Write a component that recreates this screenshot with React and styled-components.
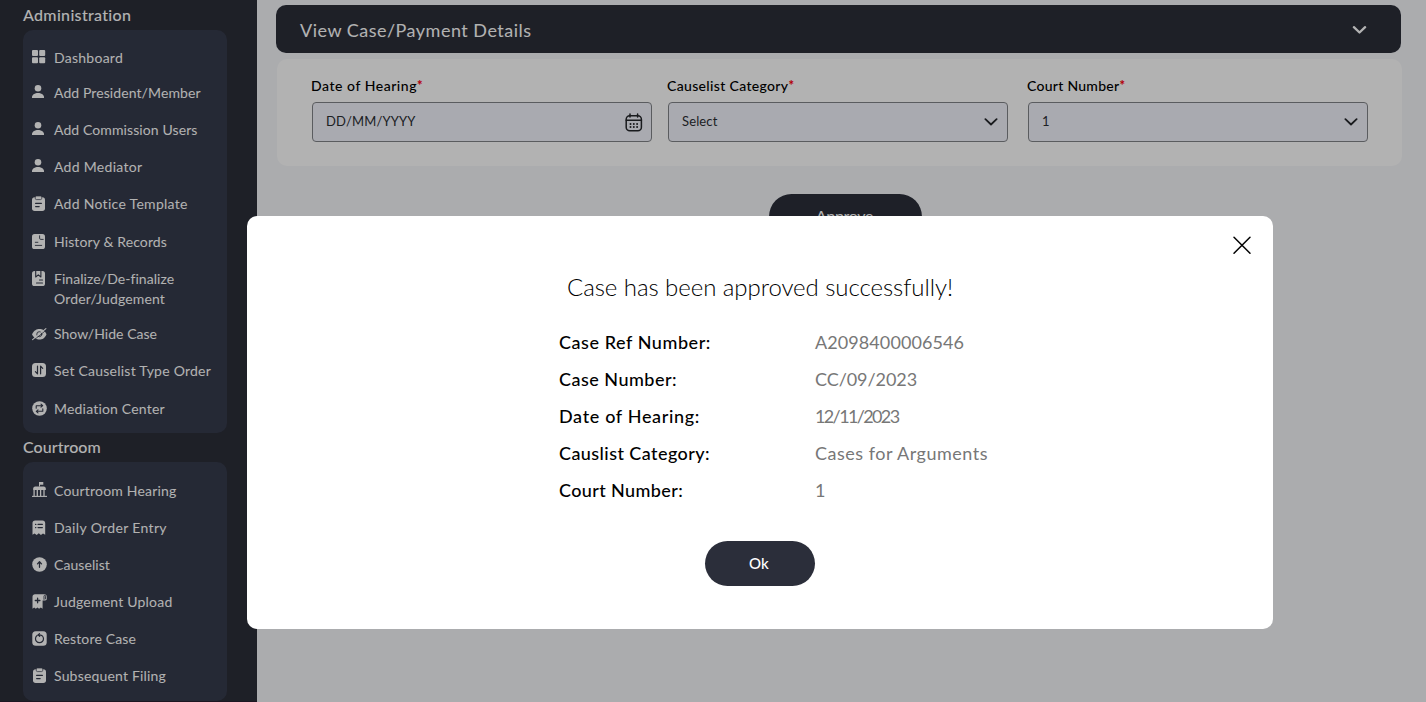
import React from "react";
import styled, { createGlobalStyle } from "styled-components";

const GlobalStyle = createGlobalStyle`
  *, *::before, *::after { box-sizing: border-box; }
  body {
    margin: 0;
    overflow: hidden;
    background: #f5f7fa;
    font-family: Lato, "Open Sans", sans-serif;
    font-variant-ligatures: none;
  }
  button { font-family: inherit; border: 0; padding: 0; cursor: pointer; }
`;

const Text = styled.span`
  white-space: nowrap;
  letter-spacing: ${(p) => p.$track || 0}px;
`;

const Shell = styled.div`
  display: flex;
  height: 702px;
`;

/* Sidebar */
const Sidebar = styled.aside`
  display: flex;
  flex-direction: column;
  width: 257px;
  flex: none;
  padding: 5px 30px 0 23px;
  background: #2b2e39;
  border-bottom: 1px solid #2a2032;
`;

const SectionTitle = styled.h2`
  margin: 0;
  height: ${(p) => p.$height}px;
  padding-top: ${(p) => p.$top || 0}px;
  font-size: 16px;
  font-weight: 500;
  line-height: 20px;
  color: #fff;
`;

const Menu = styled.nav`
  display: flex;
  flex-direction: column;
  flex: none;
  height: ${(p) => p.$height}px;
  padding: ${(p) => p.$top}px 0 0 9px;
  border-radius: 10px;
  background: #363b4c;
`;

const MenuItem = styled.a`
  display: flex;
  flex: none;
  align-items: flex-start;
  gap: 6px;
  height: ${(p) => p.$height}px;
  color: #fff;
  font-size: 14px;
  line-height: 20px;
`;

const MenuIcon = styled.svg`
  flex: none;
  width: 16px;
  height: 16px;
  margin-top: ${(p) => p.$top}px;
  fill: #fff;
`;

const MenuLabel = styled.span`
  display: flex;
  flex-direction: column;
`;

/* Main area */
const Main = styled.main`
  display: flex;
  flex-direction: column;
  flex: 1;
  padding: 5px 24px 0 19px;
`;

const Header = styled.header`
  display: flex;
  align-items: center;
  justify-content: space-between;
  width: 1125px;
  height: 48px;
  padding: 1px 34px 0 24px;
  border-radius: 10px;
  background: #2b2e39;
  color: #fff;
  font-size: 18px;
  line-height: 24px;
`;

const HeaderTitle = styled.h1`
  margin: 1px 0 0;
  font: inherit;
`;

const Card = styled.section`
  display: flex;
  width: 1125px;
  height: 107px;
  margin: 6px 0 0 1px;
  padding: 17px 34px 0 35px;
  border-radius: 10px;
  background: #fff;
`;

const Field = styled.div`
  width: 340px;
  margin-right: ${(p) => p.$gap || 0}px;
`;

const Label = styled.label`
  display: flex;
  height: 26px;
  margin-left: -1px;
  color: #000;
  font-size: 14px;
  font-weight: 500;
  line-height: 19px;
`;

const Required = styled.span`
  color: #ff0010;
  font-size: 13px;
  line-height: 19px;
  font-weight: 900;
`;

const Control = styled.div`
  display: flex;
  align-items: center;
  justify-content: space-between;
  height: 40px;
  padding: 0 ${(p) => p.$right}px 0 13px;
  border: 1px solid #828589;
  border-radius: 4px;
  background: #f3f4fd;
  color: #2b2e33;
  font-size: 13px;
  line-height: 18px;
`;

const ControlText = styled(Text)`
  margin-top: -2px;
`;

const Pill = styled.button`
  width: ${(p) => p.$width}px;
  height: 45px;
  padding: 0 2px 2px 0;
  border-radius: 23px;
  background: #2b2e3a;
  color: #fff;
  font-size: ${(p) => p.$size}px;
  font-weight: ${(p) => p.$weight || 400};
`;

const Actions = styled.div`
  display: flex;
  justify-content: center;
  width: 1139px;
  margin-top: 28px;
`;

/* Dialog */
const Overlay = styled.div`
  position: fixed;
  inset: 0;
  background: rgba(0, 0, 0, 0.3);
`;

const Dialog = styled.div`
  position: absolute;
  left: 247px;
  top: 216px;
  display: flex;
  flex-direction: column;
  align-items: center;
  width: 1026px;
  height: 413px;
  border-radius: 10px;
  background: #fff;
`;

const DialogBar = styled.div`
  display: flex;
  justify-content: flex-end;
  width: 100%;
  height: 56px;
  padding: 20px 21px 0 0;
`;

const Close = styled.button`
  width: 20px;
  height: 20px;
  background: none;
`;

const DialogTitle = styled.h2`
  margin: 0 0 22px;
  height: 30px;
  font-size: 24px;
  font-weight: 300;
  line-height: 30px;
  color: #000;
`;

const Details = styled.dl`
  display: grid;
  grid-template-columns: 256px 1fr;
  grid-auto-rows: 37px;
  margin: 0 0 32px;
  width: 402px;
  font-size: 18px;
  line-height: 37px;
`;

const Term = styled.dt`
  color: #000;
  font-weight: 500;
`;

const Value = styled.dd`
  margin: 0;
  min-width: 0;
  width: 180px;
  color: #777;
`;

const INK = "#363b4c";
const cut = { fill: "none", stroke: INK, strokeWidth: 1.1, strokeLinecap: "round", strokeLinejoin: "round" };

const icons = {
  grid: (
    <g>
      <rect x="0" y="0" width="6" height="6" rx="1" />
      <rect x="7.2" y="0" width="6" height="6" rx="1" />
      <rect x="0" y="7.2" width="6" height="6" rx="1" />
      <rect x="7.2" y="7.2" width="6" height="6" rx="1" />
    </g>
  ),
  person: (
    <g>
      <circle cx="6" cy="3.3" r="3.3" />
      <path d="M0 13v-.9C0 9.600 3 8 6 8s6 1.600 6 4.100v.9z" />
    </g>
  ),
  clipboard: (
    <g>
      <rect x="0" y="1.300" width="13" height="13.700" rx="2.700" />
      <rect x="3.300" y="0" width="6.400" height="3.600" rx="1.200" stroke={INK} strokeWidth=".7" />
      <path d="M3.600 7.400h5.800M3.600 10.600h3.600" {...cut} />
    </g>
  ),
  history: (
    <g>
      <rect x="0" y="0" width="13" height="15" rx="2.600" />
      <path d="M7.600 1.800v2.400c0 .8.4 1.200 1.200 1.200h2.400M3.300 8.300h2.600M3.300 11.400h6.400" {...cut} strokeWidth=".9" />
    </g>
  ),
  finalize: (
    <g>
      <rect x="0" y="0" width="13" height="15" rx="2.600" />
      <path d="M3.700 0v6l2.600-2.200L8.900 6V0M7.500 9h3M4.500 12h6" {...cut} />
    </g>
  ),
  hidden: (
    <g>
      <path d="M0 6.200C2 2.200 4.700.9 7.500.9s5.300 1.300 7 5.300c-1.700 4-4.200 5.300-7 5.300s-5.500-1.300-7.500-5.300z" />
      <circle cx="7.300" cy="6.200" r="2.500" {...cut} strokeWidth=".9" />
      <path d="M1.600 12.300L14.800 1.600" stroke={INK} strokeWidth=".8" />
      <path d="M.6 11.700L13.900.6" stroke="#fff" strokeWidth="1.100" strokeLinecap="round" />
    </g>
  ),
  sort: (
    <g>
      <rect x="0" y="0" width="14" height="14" rx="3.500" />
      <path d="M5.500 3.200v7.600L3.400 8.700M8.600 10.800V3.200l2.100 2.100" {...cut} strokeWidth="1.200" />
    </g>
  ),
  mediation: (
    <g>
      <circle cx="7.500" cy="7.500" r="7.300" />
      <path d="M4.200 7.200V4.700h6.300M9 3.200l1.700 1.500L9 6.100M10.800 7.800v2.500H4.500M6 8.900l-1.700 1.400L6 11.800" {...cut} />
    </g>
  ),
  court: (
    <g>
      <path d="M7 4.600V.1h4.300v2.700H8v1.600z" />
      <path d="M1.200 8V6.500c0-1.200.8-2 2-2.100h8.600c1.200.1 2 .9 2 2.100V8z" />
      <path d="M2.100 7.500v6.700M5.300 7.500v6.700M8.600 7.500v6.700M12 7.500v6.700" stroke="#fff" strokeWidth="1.300" />
      <path d="M0 14.400h15" stroke="#fff" strokeWidth="1.100" />
    </g>
  ),
  receipt: (
    <g>
      <path d="M.5 3c0-1.700 1-2.600 2.600-2.600h7.400c1.600 0 2.700.9 2.700 2.600v11.700l-2.200-1.200-2.100 1.400-2.100-1.600-2.100 1.600-2.100-1.400-2.100 1.200z" />
      <path d="M3.500 4.400h.4M6 4.400h4.400M3.500 7.600h.4M6 7.600h4.400" {...cut} />
    </g>
  ),
  upload: (
    <g>
      <circle cx="7.500" cy="7.500" r="7.300" />
      <path d="M7.500 10.300V5M5.500 6.900l2-2.100 2 2.100" {...cut} strokeWidth="1.300" />
    </g>
  ),
  judgement: (
    <g>
      <path d="M.5 2.800C.5 1.200 1.500.3 3 .3h9.300c1.600 0 2.500 1 2.500 2.500v2c0 1.100-.6 1.700-1.700 1.700h-2.500v8.300L8.800 13.400l-1.700 1.400-1.700-1.400-1.600 1.400-1.600-1.300-1.700 1.300z" />
      <path d="M12 5.400V2.200c0-.6.4-.9.8-.9.500 0 .8.300.8.900v2.600" {...cut} strokeWidth=".9" />
      <path d="M5.600 4.200v4.600M3.300 6.500h4.600" {...cut} strokeWidth="1.300" />
    </g>
  ),
  restore: (
    <g>
      <rect x=".3" y=".3" width="14.400" height="14.400" rx="3.500" />
      <path d="M5.100 4.500a4 4 0 1 0 4.900.1M7.500 2.600L6 3.900l1.700 1.500M6.200 3.900c1.500-.2 2.800 0 3.900.8" {...cut} strokeWidth="1.200" />
    </g>
  ),
};

const administration = [
  { icon: "grid", top: 2, height: 35, lines: [["Dashboard", 0.26]] },
  { icon: "person", top: 2, height: 37, lines: [["Add President/Member", 0.09]] },
  { icon: "person", top: 2, height: 37, lines: [["Add Commission Users", 0.1]] },
  { icon: "person", top: 2, height: 37, lines: [["Add Mediator", 0.3]] },
  { icon: "clipboard", top: 2, height: 38, lines: [["Add Notice Template", 0.29]] },
  { icon: "history", top: 2, height: 37, lines: [["History & Records", 0.12]] },
  { icon: "finalize", top: 2, height: 55, lines: [["Finalize/De-finalize", 0.06], ["Order/Judgement", 0.15]] },
  { icon: "hidden", top: 4, height: 37, lines: [["Show/Hide Case", 0.03]] },
  { icon: "sort", top: 2, height: 38, lines: [["Set Causelist Type Order", 0.24]] },
  { icon: "mediation", top: 2, height: 37, lines: [["Mediation Center", 0.19]] },
];

const courtroom = [
  { icon: "court", top: 1, height: 37, lines: [["Courtroom Hearing", 0.19]] },
  { icon: "receipt", top: 2, height: 37, lines: [["Daily Order Entry", 0.35]] },
  { icon: "upload", top: 2, height: 37, lines: [["Causelist", 0.07]] },
  { icon: "judgement", top: 2, height: 37, lines: [["Judgement Upload", 0.21]] },
  { icon: "restore", top: 2, height: 37, lines: [["Restore Case", 0.15]] },
  { icon: "clipboard", top: 2, height: 37, shift: 1, lines: [["Subsequent Filing", 0.18]] },
];

const details = [
  ["Case Ref Number:", 0.56, "A2098400006546", 0.08],
  ["Case Number:", 0.48, "CC/09/2023", -0.07],
  ["Date of Hearing:", 0.66, "12/11/2023", -1.63],
  ["Causlist Category:", 0.43, "Cases for Arguments", 0.5],
  ["Court Number:", 0.38, "1", 0],
];

const MenuList = ({ items, height, top }) => (
  <Menu $height={height} $top={top}>
    {items.map((item) => (
      <MenuItem key={item.lines[0][0]} $height={item.height}>
        <MenuIcon viewBox={`${-(item.shift || 0)} 0 16 16`} $top={item.top}>
          {icons[item.icon]}
        </MenuIcon>
        <MenuLabel>
          {item.lines.map(([text, track]) => (
            <Text key={text} $track={track}>{text}</Text>
          ))}
        </MenuLabel>
      </MenuItem>
    ))}
  </Menu>
);

const Chevron = ({ color, weight, width }) => (
  <svg width={width} height="8" viewBox="0 0 14 8" fill="none" stroke={color} strokeWidth={weight} strokeLinecap="round" strokeLinejoin="round">
    <path d="M1.400 1.200L7 6.500l5.600-5.300" />
  </svg>
);

const Calendar = () => (
  <svg width="18" height="19" viewBox="0 0 18 19" fill="none" stroke="#25272b" strokeWidth="1.500" strokeLinecap="round">
    <rect x="1.200" y="2.700" width="15.200" height="15" rx="3.500" />
    <path d="M1.200 7.200h15.200M5 1v3M12.600 1v3" />
    <path d="M5.500 10.900h.01M8.800 10.900h.01M12.100 10.900h.01M5.500 14h.01M8.800 14h.01M12.100 14h.01" strokeWidth="2" />
  </svg>
);

const FormField = ({ label, track, gap, value, valueTrack, right, children }) => (
  <Field $gap={gap}>
    <Label>
      <Text $track={track}>{label}</Text>
      <Required>*</Required>
    </Label>
    <Control $right={right}>
      <ControlText $track={valueTrack}>{value}</ControlText>
      {children}
    </Control>
  </Field>
);

export default function App() {
  return (
    <>
      <GlobalStyle />
      <Shell>
        <Sidebar>
          <SectionTitle $height={25}><Text $track={0.32}>Administration</Text></SectionTitle>
          <MenuList items={administration} height={403} top={18} />
          <SectionTitle $height={29} $top={4}><Text $track={0.06}>Courtroom</Text></SectionTitle>
          <MenuList items={courtroom} height={239} top={19} />
        </Sidebar>
        <Main>
          <Header>
            <HeaderTitle><Text $track={0.49}>View Case/Payment Details</Text></HeaderTitle>
            <Chevron color="#fff" weight={2.3} width={15} />
          </Header>
          <Card>
            <FormField label="Date of Hearing" track={0.54} gap={16} value="DD/MM/YYYY" valueTrack={0.15} right={8}>
              <Calendar />
            </FormField>
            <FormField label="Causelist Category" track={0.34} gap={20} value="Select" valueTrack={0.14} right={9}>
              <Chevron color="#25272b" weight={1.8} width={14} />
            </FormField>
            <FormField label="Court Number" track={0.28} value="1" right={9}>
              <Chevron color="#25272b" weight={1.8} width={14} />
            </FormField>
          </Card>
          <Actions>
            <Pill $width={153} $size={16}><Text $track={-0.3}>Approve</Text></Pill>
          </Actions>
        </Main>
      </Shell>
      <Overlay>
        <Dialog role="dialog">
          <DialogBar>
            <Close aria-label="Close">
              <svg width="20" height="20" viewBox="0 0 20 20" stroke="#000" strokeWidth="1.500" strokeLinecap="round">
                <path d="M2 1.300L18 17.300M18 1.300L2 17.300" />
              </svg>
            </Close>
          </DialogBar>
          <DialogTitle><Text $track={-0.06}>Case has been approved successfully!</Text></DialogTitle>
          <Details>
            {details.map(([term, termTrack, value, valueTrack]) => (
              <React.Fragment key={term}>
                <Term><Text $track={termTrack}>{term}</Text></Term>
                <Value><Text $track={valueTrack}>{value}</Text></Value>
              </React.Fragment>
            ))}
          </Details>
          <Pill $width={110} $size={15} $weight={500}><Text $track={0.19}>Ok</Text></Pill>
        </Dialog>
      </Overlay>
    </>
  );
}
